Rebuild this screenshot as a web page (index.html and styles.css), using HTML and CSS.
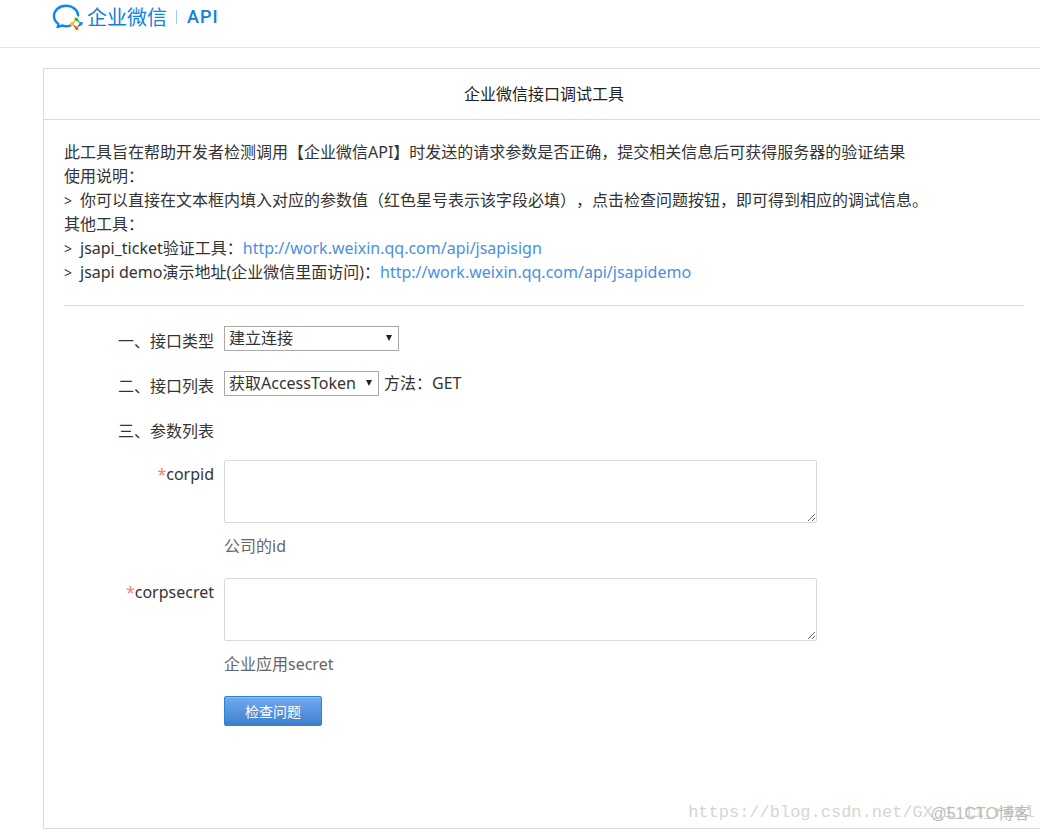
FILE: index.html
```html
<!DOCTYPE html>
<html lang="zh-CN">
<head>
<meta charset="utf-8">
<title>企业微信接口调试工具</title>
<link rel="stylesheet" href="styles.css">
</head>
<body>
<header class="header">
  <a class="logo" href="#">
    <svg class="logo-mark" viewBox="0 0 32 28" width="32" height="28" aria-hidden="true">
      <path d="M26.200 12.500C25.800 6.600 20.600 2.800 14 2.800C7.200 2.800 2 7.200 2 12.900C2 16.200 3.700 18.900 6.400 20.900L5.600 24.200L9.800 22.500C12.500 23.400 15.600 23.400 18.300 22.600" fill="none" stroke="#0f86f0" stroke-width="2.400" stroke-linecap="round" stroke-linejoin="round"/>
      <circle cx="24.500" cy="20.700" r="3.600" fill="none" stroke="#d8e6c8" stroke-width="1"/>
      <path d="M22.600 14.800Q25 13.600 26 16Q26.200 18 28 19.300L26.600 19.600Q25 17.800 22.800 17.600Z" fill="#2fb02f"/>
      <path d="M30.400 19Q31.600 21.500 29.200 22.400Q27.300 22.500 26 24.200L25.700 22.800Q27.400 21.300 27.700 19.200Z" fill="#0f86f0"/>
      <path d="M26.400 26.700Q24 28 22.900 25.600Q22.700 23.700 21 22.400L22.500 22.100Q23.900 23.800 26.100 24Z" fill="#fa6400"/>
      <path d="M18.600 22.500Q17.400 20 19.800 19Q21.700 18.900 23 17.200L23.300 18.700Q21.600 20.100 21.400 22.300Z" fill="#fbbc05"/>
    </svg>
    <span class="logo-name">企业微信</span>
    <span class="logo-api">API</span>
  </a>
</header>
<main class="panel">
  <h1 class="panel-title">企业微信接口调试工具</h1>
  <div class="panel-body">
    <div class="intro">
      <p>此工具旨在帮助开发者检测调用【企业微信API】时发送的请求参数是否正确，提交相关信息后可获得服务器的验证结果</p>
      <p>使用说明：</p>
      <p><span class="arrow">&gt;</span>你可以直接在文本框内填入对应的参数值（红色星号表示该字段必填），点击检查问题按钮，即可得到相应的调试信息。</p>
      <p>其他工具：</p>
      <p><span class="arrow">&gt;</span>jsapi_ticket验证工具：<a href="#">http://work.weixin.qq.com/api/jsapisign</a></p>
      <p><span class="arrow">&gt;</span>jsapi demo演示地址(企业微信里面访问)：<a href="#">http://work.weixin.qq.com/api/jsapidemo</a></p>
    </div>
    <form class="form">
      <label class="label" for="type">一、接口类型</label>
      <div class="field">
        <span class="select select-type"><select id="type"><option>建立连接</option></select></span>
      </div>
      <label class="label" for="api">二、接口列表</label>
      <div class="field">
        <span class="select select-api"><select id="api"><option>获取AccessToken</option></select></span>
        <span>方法：GET</span>
      </div>
      <span class="label">三、参数列表</span>
      <div class="field field-empty"></div>
      <label class="label label-param" for="corpid"><span class="required">*</span>corpid</label>
      <div class="param">
        <textarea id="corpid"></textarea>
        <p class="hint">公司的id</p>
      </div>
      <label class="label label-param" for="corpsecret"><span class="required">*</span>corpsecret</label>
      <div class="param">
        <textarea id="corpsecret"></textarea>
        <p class="hint">企业应用secret</p>
      </div>
      <button class="submit" type="button">检查问题</button>
    </form>
  </div>
  <span class="mark mark-url">https://blog.csdn.net/GX_1_11_real</span>
  <span class="mark mark-site">@51CTO博客</span>
</main>
</body>
</html>
```

FILE: styles.css
```css
* {
  box-sizing: border-box;
}

body {
  margin: 0;
  overflow-x: hidden;
  background: #fff;
  color: #333;
  font: 16px/24px "Noto Sans", "Noto Sans CJK SC", sans-serif;
  text-spacing-trim: space-all;
}

p {
  margin: 0;
}

a {
  color: #4a90e2;
  text-decoration: none;
}

.header {
  height: 48px;
  padding: 3px 52px 0;
  border-bottom: 1px solid #e2e2e2;
}

.logo {
  display: inline-flex;
  align-items: center;
  color: #0f80e0;
  line-height: 28px;
}

.logo-name {
  margin-left: 3px;
  font-size: 20px;
  font-family: "Noto Sans CJK SC", sans-serif;
}

.logo-api {
  margin-left: 9px;
  padding-left: 10px;
  border-left: 1px solid #9fcdf4;
  font: 500 18px/14px Roboto, sans-serif;
  letter-spacing: 1px;
}

.panel {
  position: relative;
  min-height: 761px;
  margin: 20px -5px 3px 43px;
  border: 1px solid #d9dadc;
}

.panel-title {
  margin: 0;
  padding: 13px 0;
  border-bottom: 1px solid #d9dadc;
  color: #222;
  font-size: 16px;
  font-weight: 400;
  text-align: center;
}

.panel-body {
  padding: 20px;
}

.intro {
  padding-bottom: 21px;
  border-bottom: 1px solid #d9dadc;
}

.arrow {
  display: inline-block;
  width: 16px;
  font-size: 14px;
  line-height: 16px;
}

.form {
  display: grid;
  grid-template-columns: 150px minmax(0, 593px);
  column-gap: 10px;
  padding-top: 20px;
}

.label {
  padding-top: 3px;
  text-align: right;
}

.label-param {
  padding-top: 2px;
}

.required {
  color: #ff7b6b;
}

.field {
  display: flex;
  gap: 5px;
  height: 45px;
}

.field-empty {
  height: 44px;
}

.select {
  position: relative;
  height: 25px;
}

.select::after {
  content: "";
  position: absolute;
  top: 9px;
  right: 7px;
  border: 3px solid transparent;
  border-top: 6px solid #222;
  border-bottom: 0;
}

.select select {
  width: 100%;
  height: 25px;
  padding: 0 4px;
  appearance: none;
  border: 1px solid #a9a9a9;
  border-radius: 0;
  background: #fff;
  color: #333;
  font: inherit;
  line-height: 23px;
}

.select-type {
  width: 175px;
}

.select-api {
  width: 155px;
}

.param {
  height: 118px;
}

textarea {
  display: block;
  width: 100%;
  height: 63px;
  border: 1px solid #d9dadc;
  border-radius: 2px;
  font: inherit;
}

.hint {
  padding-top: 11px;
  color: #666;
}

.submit {
  grid-column: 2;
  justify-self: start;
  width: 98px;
  height: 30px;
  padding: 0;
  border: 1px solid #2b85c8;
  border-radius: 2px;
  background: linear-gradient(#72aaf2, #3f7fce);
  box-shadow: inset 0 1px 0 #8ebcf6;
  color: #fff;
  font: 14px/26px "Noto Sans CJK SC", sans-serif;
}

.mark {
  position: absolute;
  white-space: nowrap;
}

.mark-url {
  right: 9px;
  bottom: 3px;
  color: #d6d6d0;
  font: 17px/24px "Liberation Mono", monospace;
}

.mark-site {
  right: 14px;
  bottom: 2px;
  color: #bbb;
  font: 16px/24px "Liberation Sans", "Noto Sans CJK SC", sans-serif;
}
```
